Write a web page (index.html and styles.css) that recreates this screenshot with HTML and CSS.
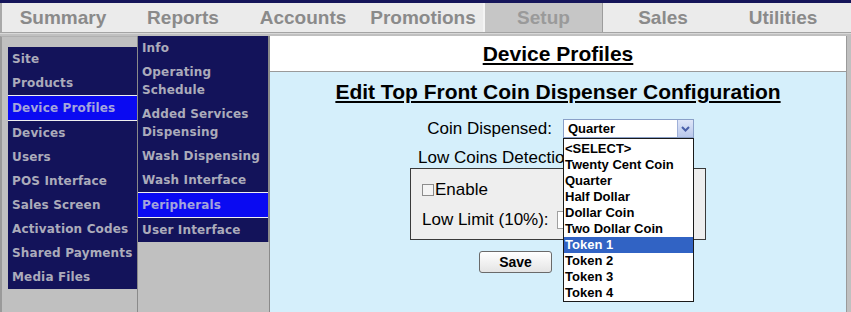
FILE: index.html
```html
<!DOCTYPE html>
<html lang="en">
<head>
  <meta charset="UTF-8" />
  <title>Setup - Device Profiles</title>
  <link rel="stylesheet" href="styles.css">
</head>
<body>
<header class="topbar">
  <nav class="tabs">
    <a class="tab">Summary</a>
    <a class="tab">Reports</a>
    <a class="tab">Accounts</a>
    <a class="tab">Promotions</a>
    <a class="tab active">Setup</a>
    <a class="tab">Sales</a>
    <a class="tab">Utilities</a>
  </nav>
</header>
<div class="layout">
  <aside class="col-main">
    <ul class="menu">
      <li>Site</li>
      <li>Products</li>
      <li class="selected">Device Profiles</li>
      <li>Devices</li>
      <li>Users</li>
      <li>POS Interface</li>
      <li>Sales Screen</li>
      <li>Activation Codes</li>
      <li>Shared Payments</li>
      <li>Media Files</li>
    </ul>
  </aside>
  <aside class="col-sub">
    <ul class="menu">
      <li>Info</li>
      <li>Operating<br>Schedule</li>
      <li>Added Services<br>Dispensing</li>
      <li>Wash Dispensing</li>
      <li>Wash Interface</li>
      <li class="selected">Peripherals</li>
      <li>User Interface</li>
    </ul>
  </aside>
  <main class="content">
    <div class="page-head"><h1>Device Profiles</h1></div>
    <section class="editor">
      <h2>Edit Top Front Coin Dispenser Configuration</h2>
      <div class="row-coin">
        <label class="coin-label">Coin Dispensed:</label>
        <div class="select-box">
          <span>Quarter</span>
          <span class="arrow">
            <svg width="13" height="13" viewBox="0 0 13 13"><path d="M3 5 L6.5 8.5 L10 5" fill="none" stroke="#4a5fa8" stroke-width="2"/></svg>
          </span>
        </div>
      </div>
      <div class="low-title">Low Coins Detection:</div>
      <div class="low-box">
        <div class="check-row"><span class="checkbox"></span>Enable</div>
        <div class="limit-row">Low Limit (10%): <span class="limit-input"></span></div>
      </div>
      <div class="save-row"><button class="save">Save</button></div>

      <ul class="dropdown">
        <li>&lt;SELECT&gt;</li>
        <li>Twenty Cent Coin</li>
        <li>Quarter</li>
        <li>Half Dollar</li>
        <li>Dollar Coin</li>
        <li>Two Dollar Coin</li>
        <li class="hl">Token 1</li>
        <li>Token 2</li>
        <li>Token 3</li>
        <li>Token 4</li>
      </ul>
    </section>
  </main>
</div>
</body>
</html>
```

FILE: styles.css
```css
* {
  box-sizing: border-box;
}
html, body {
  height: 100%;
}
body {
  margin: 0;
  background: #c0c0c0;
  font-family: "Liberation Sans", Arial, sans-serif;
  overflow: hidden;
}

/* top tabs */
.topbar {
  border-top: 3px solid #15155a;
  background: #ebebeb;
  border-bottom: 1px solid #a4a4a4;
  box-shadow: 0 1px 0 #d8d8d8;
}
.tabs {
  display: flex;
  height: 29px;
  padding-left: 1px;
  border-left: 2px solid #a8a8a8;
}
.tab {
  width: 120px;
  text-align: center;
  font-weight: bold;
  font-size: 19px;
  line-height: 29px;
  color: #8a8a8a;
}
.tab.active {
  background: #c6c6c6;
  color: #9a9a9a;
  border-left: 2px solid #f4f4f4;
  border-right: 1px solid #9c9c9c;
}

/* columns */
.layout {
  display: flex;
  height: calc(100% - 33px);
  padding-top: 3px;
}
.col-main {
  width: 137px;
  border-left: 2px solid #9a9a9a;
  border-top: 1px solid #b0b0b0;
  padding: 10px 0 0 6px;
}
.col-sub {
  width: 132px;
  border-left: 1px solid #8a8a8a;
}
.menu {
  list-style: none;
  margin: 0;
  padding: 0;
  background: #13135a;
  font-family: "DejaVu Sans", Verdana, sans-serif;
  font-weight: bold;
  font-size: 12px;
  letter-spacing: 0.15px;
  color: #ababba;
}
.menu li {
  padding: 3px 4px;
  line-height: 18px;
  white-space: nowrap;
}
.menu li.selected {
  background: #0a0af2;
  color: #a4a4dc;
  border-top: 1px solid #f0f0f0;
  border-bottom: 1px solid #f0f0f0;
}
.col-sub .menu {
  border-right: 1px solid #8a8a8a;
}

/* content */
.content {
  flex: 1;
  margin-right: 4px;
  border-left: 1px solid #8a8a8a;
  border-right: 1px solid #9a9a9a;
  background: #d5effb;
  display: flex;
  flex-direction: column;
}
.page-head {
  background: #ffffff;
  height: 36px;
  border-bottom: 1px solid #9a9a9a;
  text-align: center;
}
.page-head h1 {
  margin: 0;
  font-size: 21px;
  line-height: 36px;
  text-decoration: underline;
  color: #000;
}
.editor {
  position: relative;
  flex: 1;
}
.editor h2 {
  margin: 0;
  padding-top: 8px;
  text-align: center;
  font-size: 21px;
  line-height: 24px;
  text-decoration: underline;
}
.row-coin {
  display: flex;
  align-items: center;
  margin-top: 15px;
  padding-left: 154px;
  height: 19px;
}
.coin-label {
  width: 128px;
  font-size: 17px;
  text-align: right;
  margin-right: 11px;
}
.select-box {
  width: 131px;
  height: 19px;
  background: #fff;
  border: 1px solid #8aa0c8;
  display: flex;
  align-items: center;
  justify-content: space-between;
  font-size: 13px;
  font-weight: bold;
  padding-left: 4px;
}
.arrow {
  width: 16px;
  height: 17px;
  background: linear-gradient(#dfe6f8, #b9c8ec);
  border-left: 1px solid #9fb0d8;
  display: flex;
  align-items: center;
  justify-content: center;
}
.low-title {
  margin-top: 10px;
  padding-left: 148px;
  font-size: 17px;
  line-height: 20px;
}
.low-box {
  margin: 0 0 0 140px;
  width: 296px;
  height: 72px;
  background: #eeeeee;
  border: 1px solid #3a3a3a;
  padding: 11px 0 0 11px;
  font-size: 17px;
}
.check-row {
  display: flex;
  align-items: center;
  height: 20px;
}
.checkbox {
  width: 12px;
  height: 12px;
  border: 1px solid #8c8c8c;
  background: #f4f4f4;
  margin-right: 1px;
}
.limit-row {
  display: flex;
  align-items: center;
  margin-top: 10px;
  height: 20px;
}
.limit-input {
  width: 40px;
  height: 18px;
  margin-left: 8px;
  border: 1px solid #a0a0a0;
  background: #fff;
}
.save-row {
  padding: 11px 0 0 209px;
}
.save {
  width: 73px;
  height: 22px;
  font-family: "Liberation Sans", Arial, sans-serif;
  font-weight: bold;
  font-size: 14px;
  background: linear-gradient(#ffffff, #e4e4e4);
  border: 1px solid #6a6a6a;
  border-radius: 3px;
  padding: 0;
}

/* open select list */
.dropdown {
  position: absolute;
  left: 293px;
  top: 66px;
  width: 131px;
  margin: 0;
  padding: 2px 0 0;
  list-style: none;
  background: #fff;
  border: 1px solid #1a1a1a;
  font-size: 13px;
  font-weight: bold;
}
.dropdown li {
  height: 16px;
  line-height: 16px;
  padding-left: 1px;
  white-space: nowrap;
}
.dropdown li.hl {
  background: #3163c4;
  color: #fff;
}
```
